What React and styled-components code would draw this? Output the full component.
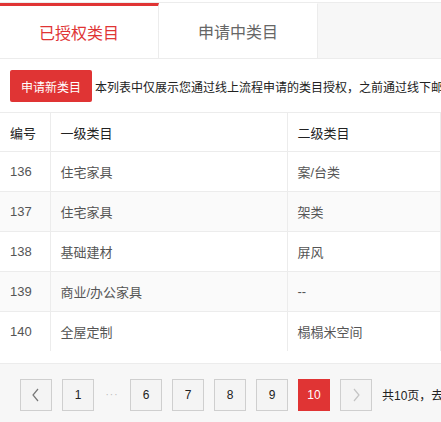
import React from "react";
import styled, { createGlobalStyle } from "styled-components";

const Global = createGlobalStyle`
  html, body {
    margin: 0;
    padding: 0;
    background: #fff;
  }
  body {
    font-family: "Liberation Sans", "Noto Sans CJK SC", sans-serif;
    color: #333;
    overflow: hidden;
  }
`;

const Page = styled.div`
  width: 441px;
  height: 422px;
  overflow: hidden;
  padding-top: 2px;
  box-sizing: border-box;
`;

const TabBar = styled.div`
  display: flex;
  height: 55px;
  background: #f7f7f7;
  border-top: 1px solid #ececec;
  border-bottom: 1px solid #ececec;
`;

const Tab = styled.div`
  width: 159px;
  display: flex;
  align-items: center;
  justify-content: center;
  background: #fff;
  font-size: 16px;
  border-right: 1px solid #ececec;
  border-top: ${(p) => (p.active ? "3px solid #e03434" : "1px solid #fff")};
  color: ${(p) => (p.active ? "#e03434" : "#666")};
  padding-bottom: ${(p) => (p.active ? "0" : "1px")};
  box-sizing: border-box;
`;

const Toolbar = styled.div`
  display: flex;
  align-items: center;
  padding: 11px 0 10px 10px;
  white-space: nowrap;
`;

const Button = styled.button`
  height: 32px;
  padding: 0 11px;
  border: none;
  border-radius: 2px;
  background: #e03434;
  color: #fff;
  font-family: inherit;
  font-size: 12px;
  cursor: pointer;
`;

const Note = styled.span`
  margin-left: 3px;
  font-size: 12px;
  color: #222;
`;

const Table = styled.table`
  width: 100%;
  border-collapse: collapse;
  table-layout: fixed;
  font-size: 13px;
`;

const Th = styled.th`
  height: 38px;
  padding: 0 10px;
  text-align: left;
  font-weight: normal;
  color: #222;
  border-top: 1px solid #ececec;
  border-bottom: 1px solid #ececec;
  border-right: 1px solid #ececec;
`;

const Tr = styled.tr`
  background: ${(p) => (p.striped ? "#fafafa" : "#fff")};
`;

const Td = styled.td`
  height: 39px;
  padding: 0 10px;
  color: #555;
  border-bottom: ${(p) => (p.last ? "none" : "1px solid #ececec")};
  border-right: 1px solid #ececec;
`;

const Pager = styled.div`
  margin-top: 12px;
  height: 62px;
  background: #f7f7f7;
  border-top: 1px solid #ececec;
  display: flex;
  align-items: center;
  padding: 0 0 0 20px;
  gap: 10px;
  white-space: nowrap;
  overflow: hidden;
  box-sizing: border-box;
`;

const PageBtn = styled.div`
  flex: none;
  width: 32px;
  height: 32px;
  box-sizing: border-box;
  display: flex;
  align-items: center;
  justify-content: center;
  font-size: 12px;
  border: 1px solid ${(p) => (p.active ? "#e03434" : "#cfcfcf")};
  background: ${(p) => (p.active ? "#e03434" : "#f4f4f4")};
  color: ${(p) => (p.active ? "#fff" : "#222")};
`;

const Dots = styled.div`
  flex: none;
  width: 16px;
  text-align: center;
  color: #bbb;
  font-size: 10px;
  letter-spacing: 1px;
`;

const Total = styled.span`
  font-size: 12px;
  color: #222;
`;

const Chevron = ({ dir, color }) => (
  <svg width="10" height="14" viewBox="0 0 10 14">
    <polyline
      points={dir === "left" ? "7,1 2,7 7,13" : "3,1 8,7 3,13"}
      fill="none"
      stroke={color}
      strokeWidth="1.2"
    />
  </svg>
);

const rows = [
  ["136", "住宅家具", "案/台类"],
  ["137", "住宅家具", "架类"],
  ["138", "基础建材", "屏风"],
  ["139", "商业/办公家具", "--"],
  ["140", "全屋定制", "榻榻米空间"],
];

export default function App() {
  return (
    <Page>
      <Global />
      <TabBar>
        <Tab active>已授权类目</Tab>
        <Tab>申请中类目</Tab>
      </TabBar>
      <Toolbar>
        <Button>申请新类目</Button>
        <Note>本列表中仅展示您通过线上流程申请的类目授权，之前通过线下邮件申请的类目授权请联系客服查询</Note>
      </Toolbar>
      <Table>
        <colgroup>
          <col style={{ width: 50 }} />
          <col style={{ width: 237 }} />
          <col />
        </colgroup>
        <thead>
          <tr>
            <Th>编号</Th>
            <Th>一级类目</Th>
            <Th>二级类目</Th>
          </tr>
        </thead>
        <tbody>
          {rows.map((r, i) => (
            <Tr key={r[0]} striped={i % 2 === 1}>
              <Td last={i === rows.length - 1}>{r[0]}</Td>
              <Td last={i === rows.length - 1}>{r[1]}</Td>
              <Td last={i === rows.length - 1}>{r[2]}</Td>
            </Tr>
          ))}
        </tbody>
      </Table>
      <Pager>
        <PageBtn>
          <Chevron dir="left" color="#777" />
        </PageBtn>
        <PageBtn>1</PageBtn>
        <Dots>···</Dots>
        <PageBtn>6</PageBtn>
        <PageBtn>7</PageBtn>
        <PageBtn>8</PageBtn>
        <PageBtn>9</PageBtn>
        <PageBtn active>10</PageBtn>
        <PageBtn>
          <Chevron dir="right" color="#c4c4c4" />
        </PageBtn>
        <Total>共10页，去第</Total>
      </Pager>
    </Page>
  );
}
